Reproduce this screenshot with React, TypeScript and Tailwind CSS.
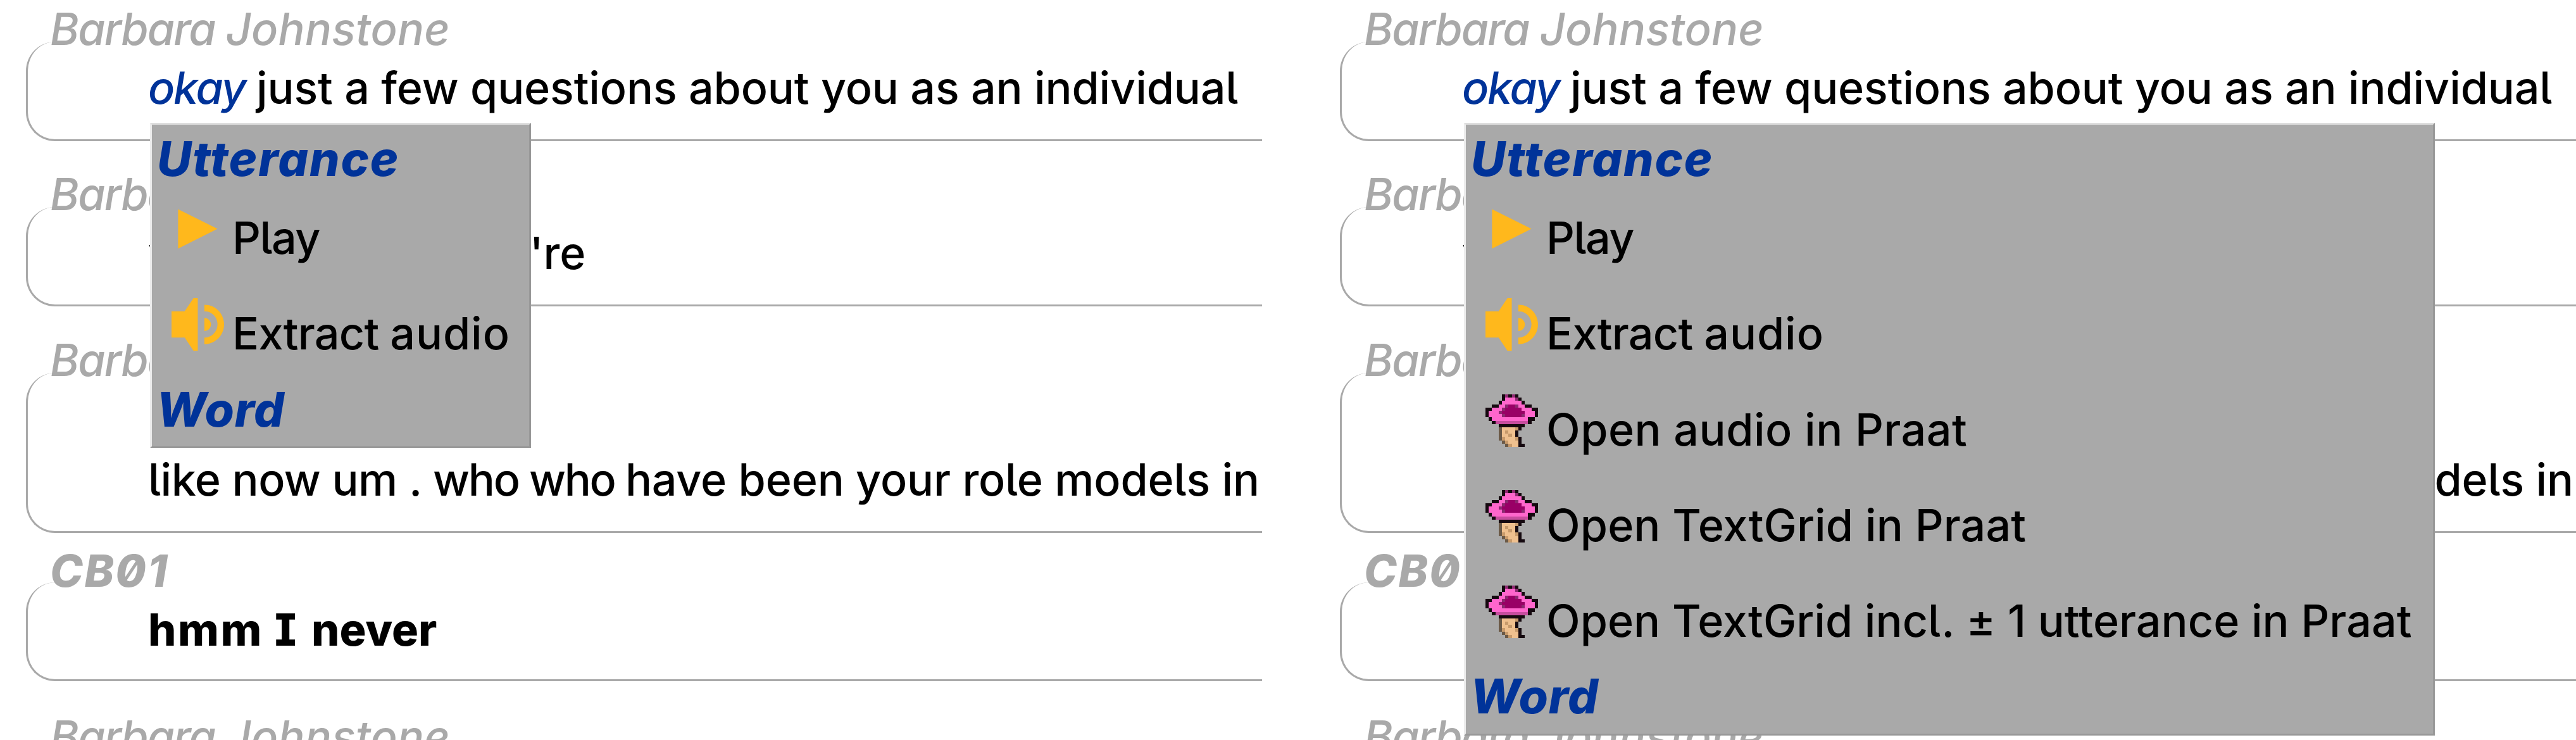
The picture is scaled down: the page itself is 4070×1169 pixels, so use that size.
import type { ReactNode } from "react";

const PRAAT_ROWS = [
  ".....kdkdk......",
  ".....kpppdk.....",
  "....kppppppk....",
  "..kkppdmmdppkk..",
  "kkpppdmmmmmpppkk",
  "kpppdmmmmmmmpppk",
  "kppppdmmmmmdpppk",
  ".kpppppppppppkk.",
  "..kqqqqqqqqqqk..",
  "....kkkkkkkk....",
  "....gttttbk.....",
  "....gtbttk......",
  "....gttbtk......",
  "....gbtttbk.....",
  ".....gbtttk.....",
  "......gbttkk....",
];

const PRAAT_COLOURS: Record<string, string> = {
  k: "#15090f",
  d: "#8c2a70",
  p: "#ff66cc",
  q: "#c74d9e",
  m: "#990066",
  g: "#6b5a48",
  b: "#c79a6b",
  t: "#efc08e",
};

function PraatIcon() {
  return (
    <svg viewBox="0 0 16 16" className="size-[83px] shrink-0" shapeRendering="crispEdges">
      {PRAAT_ROWS.flatMap((row, y) =>
        row.split("").map((c, x) =>
          c === "." ? null : (
            <rect key={`${x}-${y}`} x={x} y={y} width="1" height="1" fill={PRAAT_COLOURS[c]} />
          ),
        ),
      )}
    </svg>
  );
}

function PlayIcon() {
  return (
    <svg viewBox="0 0 8 8" className="size-[83px] shrink-0 fill-[#ffb81c]">
      <path d="M1 1v6l6-3-6-3z" />
    </svg>
  );
}

function AudioIcon() {
  return (
    <svg viewBox="0 0 8 8" className="size-[83px] shrink-0 fill-[#ffb81c]">
      <path d="M3.34 0l-1.34 2h-2v4h2l1.34 2h.66v-8h-.66zm1.66 1v1c.17 0 .34.02.5.06.86.22 1.5 1 1.5 1.94s-.63 1.72-1.5 1.94c-.16.04-.33.06-.5.06v1c.25 0 .48-.04.72-.09h.03c1.3-.33 2.25-1.51 2.25-2.91 0-1.4-.95-2.58-2.25-2.91-.23-.06-.49-.09-.75-.09zm0 2v2c.09 0 .18-.01.25-.03.43-.11.75-.51.75-.97 0-.46-.31-.86-.75-.97-.08-.02-.17-.03-.25-.03z" />
    </svg>
  );
}

function Barbara() {
  return (
    <>
      <span className="tracking-[-1.8px]">Barbara </span>
      <span className="tracking-[0.2px]">Johnstone</span>
    </>
  );
}

function Utterance({
  speaker,
  className,
  box,
  children,
}: {
  speaker: ReactNode;
  className: string;
  box: string;
  children?: ReactNode;
}) {
  return (
    <section className={className}>
      <div className="relative ml-[79px] h-20 text-[#a9a9a9] italic">{speaker}</div>
      <div
        className={`ml-[41px] rounded-l-[46px] border-b-[3px] border-l-[3px] border-[#a9a9a9] pl-[190px] ${box}`}
      >
        {children}
      </div>
    </section>
  );
}

function MenuHeading({ children }: { children: ReactNode }) {
  return (
    <h2 className="h-[90px] text-[75px] leading-[90px] font-extrabold text-[#003399] italic">{children}</h2>
  );
}

function MenuItem({ icon, children }: { icon: ReactNode; children: ReactNode }) {
  return (
    <li className="flex h-[151.3px] items-start gap-[13px] pt-6 pl-[31px]">
      {icon}
      <span className="mt-4">{children}</span>
    </li>
  );
}

function Menu({ className, children }: { className: string; children: ReactNode }) {
  return (
    <div
      className={`absolute top-[194px] left-[237px] border-[3px] border-t-[#dedede] border-r-[#989898] border-b-[#989898] border-l-[#ececec] bg-[#a9a9a9] pt-[9px] ${className}`}
    >
      <MenuHeading>
        <span className="ml-[8px] tracking-[1.8px]">Utterance</span>
      </MenuHeading>
      <ul>
        <MenuItem icon={<PlayIcon />}>
          <span className="tracking-[-1.5px]">Play</span>
        </MenuItem>
        <MenuItem icon={<AudioIcon />}>
          <span className="tracking-[-0.8px]">Extract </span>
          <span className="tracking-[0.9px]">audio</span>
        </MenuItem>
        {children}
      </ul>
      <div className="pt-[3px]">
        <MenuHeading>
          <span className="ml-[7px] tracking-[0.8px]">Word</span>
        </MenuHeading>
      </div>
    </div>
  );
}

function Transcript({ menu }: { menu: ReactNode }) {
  return (
    <div className="relative h-[1169px] w-[1994px] shrink-0 overflow-hidden">
      <Utterance speaker={<Barbara />} className="pt-[6px]" box="-mt-5 h-[157px] pt-[33px]">
        <span className="inline-block w-[171px] tracking-[-2.2px] text-[#003399] italic">okay</span>
        <span className="tracking-[-0.15px]">just a few questions about you as an individual</span>
      </Utterance>
      <Utterance speaker={<Barbara />} className="pt-11" box="-mt-5 h-[157px] pt-[33px]">
        <span className="tracking-[-0.15px]">yeah so when you're</span>
      </Utterance>
      <Utterance speaker={<Barbara />} className="pt-[45px]" box="-mt-5 h-[253px] pt-[129px]">
        <span className="tracking-[-0.5px]">like now um . </span>
        <span className="tracking-[-2.3px]">who who </span>
        <span className="tracking-[-0.15px]">have been your role models in</span>
      </Utterance>
      <Utterance
        speaker={<span className="tracking-[2.4px]">CB01</span>}
        className="pt-5 font-extrabold"
        box="-mt-[22px] h-[156px] pt-[35px]"
      >
        <span className="tracking-[2.6px]">hmm </span>
        <span className="tracking-[4.2px]">I </span>
        <span className="tracking-[-0.1px]">never</span>
      </Utterance>
      <Utterance speaker={<Barbara />} className="pt-12" box="-mt-5 h-[157px]" />
      {menu}
    </div>
  );
}

export default function App() {
  return (
    <main className="flex h-[1169px] w-[4070px] gap-[82px] overflow-hidden bg-white font-['Inter',sans-serif] text-[70px] leading-[80px] font-medium whitespace-nowrap text-black [font-feature-settings:'cv05','cv08','zero']">
      <Transcript menu={<Menu className="h-[514px] w-[602px]">{null}</Menu>} />
      <Transcript
        menu={
          <Menu className="h-[968px] w-[1534px]">
            <MenuItem icon={<PraatIcon />}>
              <span className="tracking-[0.5px]">Open audio in Praat</span>
            </MenuItem>
            <MenuItem icon={<PraatIcon />}>
              <span className="tracking-[0.1px]">Open TextGrid in Praat</span>
            </MenuItem>
            <MenuItem icon={<PraatIcon />}>
              <span className="tracking-[0.02px]">Open TextGrid incl. ± 1 utterance in Praat</span>
            </MenuItem>
          </Menu>
        }
      />
    </main>
  );
}
